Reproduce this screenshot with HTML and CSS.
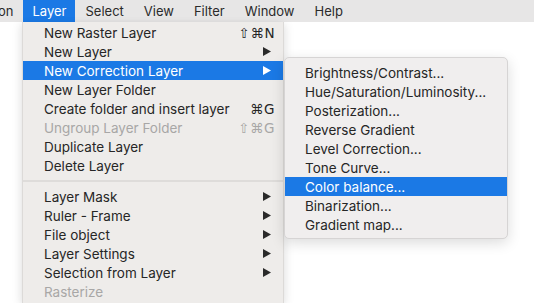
FILE: index.html
```html
<!DOCTYPE html>
<html lang="en">
  <head>
    <meta charset="UTF-8" />
    <meta name="viewport" content="width=device-width, initial-scale=1.0" />
    <title>Layer Menu</title>
    <link rel="stylesheet" href="styles.css">
  </head>
  <body>
    <nav class="menubar">
      <span class="bar-item first">on</span>
      <span class="bar-item active">Layer</span>
      <span class="bar-item">Select</span>
      <span class="bar-item">View</span>
      <span class="bar-item">Filter</span>
      <span class="bar-item">Window</span>
      <span class="bar-item">Help</span>
    </nav>

    <ul class="menu main-menu">
      <li class="item"><span>New Raster Layer</span><span class="key">⇧⌘N</span></li>
      <li class="item"><span>New Layer</span><svg class="arrow" viewBox="0 0 8 9"><polygon points="0,0 8,4.5 0,9" /></svg></li>
      <li class="item selected"><span>New Correction Layer</span><svg class="arrow" viewBox="0 0 8 9"><polygon points="0,0 8,4.5 0,9" /></svg></li>
      <li class="item"><span>New Layer Folder</span></li>
      <li class="item"><span>Create folder and insert layer</span><span class="key">⌘G</span></li>
      <li class="item disabled"><span>Ungroup Layer Folder</span><span class="key">⇧⌘G</span></li>
      <li class="item"><span>Duplicate Layer</span></li>
      <li class="item"><span>Delete Layer</span></li>
      <li class="separator"></li>
      <li class="item"><span>Layer Mask</span><svg class="arrow" viewBox="0 0 8 9"><polygon points="0,0 8,4.5 0,9" /></svg></li>
      <li class="item"><span>Ruler - Frame</span><svg class="arrow" viewBox="0 0 8 9"><polygon points="0,0 8,4.5 0,9" /></svg></li>
      <li class="item"><span>File object</span><svg class="arrow" viewBox="0 0 8 9"><polygon points="0,0 8,4.5 0,9" /></svg></li>
      <li class="item"><span>Layer Settings</span><svg class="arrow" viewBox="0 0 8 9"><polygon points="0,0 8,4.5 0,9" /></svg></li>
      <li class="item"><span>Selection from Layer</span><svg class="arrow" viewBox="0 0 8 9"><polygon points="0,0 8,4.5 0,9" /></svg></li>
      <li class="item disabled"><span>Rasterize</span></li>
    </ul>

    <ul class="menu sub-menu">
      <li class="item"><span>Brightness/Contrast...</span></li>
      <li class="item"><span>Hue/Saturation/Luminosity...</span></li>
      <li class="item"><span>Posterization...</span></li>
      <li class="item"><span>Reverse Gradient</span></li>
      <li class="item"><span>Level Correction...</span></li>
      <li class="item"><span>Tone Curve...</span></li>
      <li class="item selected"><span>Color balance...</span></li>
      <li class="item"><span>Binarization...</span></li>
      <li class="item"><span>Gradient map...</span></li>
    </ul>
  </body>
</html>
```

FILE: styles.css
```css
* {
  margin: 0;
  padding: 0;
  box-sizing: border-box;
}
body {
  width: 534px;
  height: 303px;
  overflow: hidden;
  background: #ffffff;
  font-family: Inter, "Liberation Sans", "DejaVu Sans", sans-serif;
  font-size: 13.5px;
  color: #262626;
  position: relative;
}

/* top bar */
.menubar {
  display: flex;
  height: 22px;
  background: #e7e6e6;
  font-size: 13px;
  color: #2b2b2b;
}
.bar-item {
  display: flex;
  align-items: center;
  padding: 0 10px;
}
.bar-item.first {
  padding-left: 0;
  padding-right: 10px;
  margin-left: -2px;
}
.bar-item.active {
  background: #1b79e5;
  color: #ffffff;
  padding: 0 9px;
}

/* dropdowns */
.menu {
  list-style: none;
  position: absolute;
  background: #eeecea;
}
.main-menu {
  left: 22px;
  top: 22px;
  bottom: 0;
  width: 262px;
  padding-top: 1px;
  border-left: 1px solid #dcdad8;
  border-right: 1px solid #dcdad8;
  box-shadow: -3px 2px 8px rgba(0, 0, 0, 0.08), 3px 2px 8px rgba(0, 0, 0, 0.08);
}
.sub-menu {
  left: 284px;
  top: 57px;
  width: 224px;
  padding: 5px 0 4px;
  background: #f0eeee;
  border: 1px solid #d6d4d4;
  border-radius: 5px;
  box-shadow: 0 4px 14px rgba(0, 0, 0, 0.14);
  z-index: 2;
}
.item {
  display: flex;
  align-items: center;
  justify-content: space-between;
  height: 19px;
  padding: 0 11px 0 21px;
  white-space: nowrap;
}
.sub-menu .item {
  padding-left: 20px;
}
.item.selected {
  background: #1b79e5;
  color: #ffffff;
}
.item.disabled {
  color: #a8a7a6;
}
.key {
  font-family: "DejaVu Sans", sans-serif;
  font-size: 13.5px;
  letter-spacing: 0.5px;
  margin-right: -3px;
}
.arrow {
  width: 8px;
  height: 9px;
  fill: #2a2a2a;
  margin-right: 1px;
}
.item.selected .arrow {
  fill: #ffffff;
}
.separator {
  height: 12px;
  display: flex;
  align-items: center;
}
.separator::after {
  content: "";
  flex: 1;
  height: 2px;
  background: #dedcda;
}
```
